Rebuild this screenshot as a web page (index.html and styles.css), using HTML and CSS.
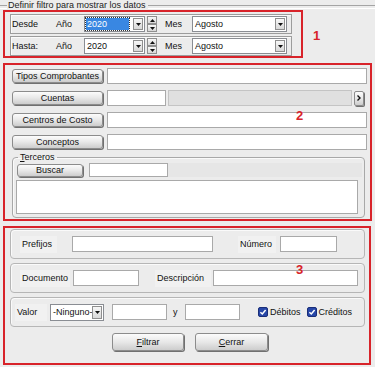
FILE: index.html
```html
<!DOCTYPE html>
<html lang="es">
<head>
  <meta charset="UTF-8">
  <meta name="viewport" content="width=device-width, initial-scale=1.0">
  <title>Definir filtro</title>
  <link rel="stylesheet" href="styles.css">
</head>
<body>
  <div class="group-title"><span>Definir filtro para mostrar los datos</span></div>

  <!-- Zona 1: periodo -->
  <div class="zone-top">
    <div class="mark mark-1">
      <div class="period">
        <span>Desde</span>
        <span>Año</span>
        <div class="combo">
          <span class="combo-text selected">2020</span>
          <span class="drop"><svg width="5" height="3" viewBox="0 0 5 3"><path d="M0 0h5L2.5 3z" fill="#111"/></svg></span>
        </div>
        <div class="spin">
          <span><svg width="5" height="3" viewBox="0 0 5 3"><path d="M0 3h5L2.5 0z" fill="#111"/></svg></span>
          <span><svg width="5" height="3" viewBox="0 0 5 3"><path d="M0 0h5L2.5 3z" fill="#111"/></svg></span>
        </div>
        <span class="lbl-mes">Mes</span>
        <div class="combo">
          <span class="combo-text">Agosto</span>
          <span class="drop"><svg width="5" height="3" viewBox="0 0 5 3"><path d="M0 0h5L2.5 3z" fill="#111"/></svg></span>
        </div>
      </div>
      <div class="period">
        <span>Hasta:</span>
        <span>Año</span>
        <div class="combo">
          <span class="combo-text">2020</span>
          <span class="drop"><svg width="5" height="3" viewBox="0 0 5 3"><path d="M0 0h5L2.5 3z" fill="#111"/></svg></span>
        </div>
        <div class="spin">
          <span><svg width="5" height="3" viewBox="0 0 5 3"><path d="M0 3h5L2.5 0z" fill="#111"/></svg></span>
          <span><svg width="5" height="3" viewBox="0 0 5 3"><path d="M0 0h5L2.5 3z" fill="#111"/></svg></span>
        </div>
        <span class="lbl-mes">Mes</span>
        <div class="combo">
          <span class="combo-text">Agosto</span>
          <span class="drop"><svg width="5" height="3" viewBox="0 0 5 3"><path d="M0 0h5L2.5 3z" fill="#111"/></svg></span>
        </div>
      </div>
    </div>
    <span class="num num-1">1</span>
  </div>

  <!-- Zona 2: selecciones -->
  <div class="mark mark-2">
    <div class="pick-row">
      <button class="btn btn-pick">Tipos Comprobantes</button>
      <div class="field field-wide"></div>
    </div>
    <div class="pick-row">
      <button class="btn btn-pick">Cuentas</button>
      <div class="field field-short"></div>
      <div class="field field-off"></div>
      <button class="btn btn-more"><svg width="4" height="6" viewBox="0 0 4 6"><path d="M0.5 0.5L3 3 0.5 5.5" fill="none" stroke="#111" stroke-width="1.4"/></svg></button>
    </div>
    <div class="pick-row">
      <button class="btn btn-pick">Centros de Costo</button>
      <div class="field field-wide"></div>
    </div>
    <div class="pick-row">
      <button class="btn btn-pick">Conceptos</button>
      <div class="field field-wide"></div>
    </div>
    <fieldset class="terceros">
      <legend><u>T</u>erceros</legend>
      <div class="buscar-row">
        <button class="btn btn-buscar">Buscar</button>
        <div class="field field-buscar"></div>
        <div class="band"></div>
      </div>
      <div class="notes"></div>
    </fieldset>
    <span class="num num-2">2</span>
  </div>

  <!-- Zona 3: criterios -->
  <div class="mark mark-3">
    <div class="panel">
      <span class="cap cap-prefijos">Prefijos</span>
      <div class="field f-prefijos"></div>
      <span class="cap cap-numero">Número</span>
      <div class="field f-numero"></div>
    </div>
    <div class="panel">
      <span class="cap cap-documento">Documento</span>
      <div class="field f-documento"></div>
      <span class="cap cap-descripcion">Descripción</span>
      <div class="field f-descripcion"></div>
    </div>
    <div class="panel">
      <span class="cap cap-valor">Valor</span>
      <div class="combo combo-valor">
        <span class="combo-text">-Ninguno-</span>
        <span class="drop"><svg width="5" height="3" viewBox="0 0 5 3"><path d="M0 0h5L2.5 3z" fill="#111"/></svg></span>
      </div>
      <div class="field f-valor"></div>
      <span class="and">y</span>
      <div class="field f-valor2"></div>
      <label class="check check-deb">
        <svg width="10" height="10" viewBox="0 0 10 10"><rect x="0.5" y="0.5" width="9" height="9" rx="1.5" fill="#2747a8" stroke="#1a2e78"/><path d="M2.4 5.2l1.9 1.8 3.3-4" fill="none" stroke="#fff" stroke-width="1.5"/></svg>
        Débitos
      </label>
      <label class="check check-cred">
        <svg width="10" height="10" viewBox="0 0 10 10"><rect x="0.5" y="0.5" width="9" height="9" rx="1.5" fill="#2747a8" stroke="#1a2e78"/><path d="M2.4 5.2l1.9 1.8 3.3-4" fill="none" stroke="#fff" stroke-width="1.5"/></svg>
        Créditos
      </label>
    </div>
    <div class="actions">
      <button class="btn btn-action"><u>F</u>iltrar</button>
      <button class="btn btn-action btn-cerrar"><u>C</u>errar</button>
    </div>
    <span class="num num-3">3</span>
  </div>
</body>
</html>
```

FILE: styles.css
```css
/* General */
* {
  box-sizing: border-box;
}

body {
  margin: 0;
  width: 375px;
  height: 367px;
  overflow: hidden;
  background: #ececec;
  font-family: "Liberation Sans", Arial, sans-serif;
  font-size: 9px;
  color: #111;
}

/* Group title */
.group-title {
  display: flex;
  height: 10px;
  line-height: 10px;
  color: #222;
}

.group-title::before,
.group-title::after {
  content: "";
  height: 2px;
  margin-top: 5px;
  border-top: 1px solid #a4a4a4;
  border-bottom: 1px solid #fff;
}

.group-title::before {
  width: 7px;
}

.group-title::after {
  flex: 1;
  margin-left: 2px;
}

.group-title span {
  margin-left: 1px;
  white-space: nowrap;
}

/* Red annotation boxes */
.mark {
  position: relative;
  border: 2px solid #d8232a;
}

.num {
  color: #d8232a;
  font-weight: bold;
  font-size: 13px;
  line-height: 13px;
}

.num-2,
.num-3 {
  position: absolute;
  left: 291px;
}

.num-2 {
  top: 44px;
}

.num-3 {
  top: 35px;
}

/* Zone 1 */
.zone-top {
  display: flex;
  align-items: center;
  padding-left: 3px;
}

.mark-1 {
  width: 300px;
  height: 48px;
  padding: 2px 0 0 5px;
}

.num-1 {
  margin-left: 10px;
  margin-top: 2px;
}

.period {
  display: grid;
  grid-template-columns: 44px 28px 61px 12px 35px 95px;
  align-items: center;
  width: 282px;
  height: 20px;
  margin-bottom: 2px;
  padding-left: 1px;
  border: 1px solid #9c9c9c;
  box-shadow: inset 1px 1px 0 #fafafa;
}

.lbl-mes {
  padding-left: 8px;
}

/* Combo boxes */
.combo {
  display: flex;
  height: 16px;
  padding: 1px;
  background: #fff;
  border: 1px solid #8a8d93;
}

.combo-text {
  flex: 1;
  line-height: 12px;
  padding-left: 1px;
  white-space: nowrap;
  overflow: hidden;
}

.combo-text.selected {
  margin-right: 4px;
  background: #3987e2;
  color: #fff;
  outline: 1px dotted #333;
}

.drop {
  display: flex;
  align-items: center;
  justify-content: center;
  width: 10px;
  border: 1px solid #8f8f8f;
  background: linear-gradient(#f7f7f7, #d8d8d8);
}

.spin {
  justify-self: end;
  display: flex;
  flex-direction: column;
  width: 10px;
  height: 16px;
}

.spin span {
  flex: 1;
  display: flex;
  align-items: center;
  justify-content: center;
  border: 1px solid #8f8f8f;
  background: linear-gradient(#f7f7f7, #d8d8d8);
}

/* Fields & buttons */
.field {
  height: 16px;
  background: #fff;
  border: 1px solid #a9a9a9;
}

.btn {
  display: flex;
  align-items: center;
  justify-content: center;
  padding: 0;
  font: inherit;
  color: #111;
  border: 1px solid #8c8c8c;
  border-radius: 3px;
  background: linear-gradient(#fcfcfc, #e8e8e8 50%, #cdcdcd);
  box-shadow: 1px 1px 0 #707070;
}

/* Zone 2 */
.mark-2 {
  width: 369px;
  margin: 5px 0 0 3px;
  padding: 3px 0 1px 0;
}

.pick-row {
  display: flex;
  align-items: center;
  height: 16px;
}

.pick-row + .pick-row {
  margin-top: 6px;
}

.btn-pick {
  width: 91px;
  height: 14px;
  margin-left: 7px;
}

.field-wide {
  width: 260px;
  margin-left: 4px;
}

.field-short {
  width: 59px;
  margin-left: 4px;
}

.field-off {
  width: 184px;
  margin-left: 2px;
  background: #e0e0e0;
  border-color: #c4c4c4;
}

.btn-more {
  width: 10px;
  height: 15px;
  margin-left: 2px;
  border-radius: 2px;
}

.terceros {
  width: 353px;
  margin: 2px 0 0 7px;
  padding: 0;
  border: 1px solid #a8a8a8;
  border-radius: 4px;
  box-shadow: inset 1px 1px 0 #fafafa;
}

.terceros legend {
  margin-left: 5px;
  padding: 0 2px;
  line-height: 10px;
}

.buscar-row {
  display: flex;
  align-items: center;
  height: 14px;
  margin-top: 1px;
}

.btn-buscar {
  width: 66px;
  height: 13px;
  margin-left: 4px;
}

.field-buscar {
  width: 79px;
  height: 14px;
  margin-left: 6px;
}

.band {
  flex: 1;
  align-self: stretch;
  margin-right: 2px;
  background: #e6e6e6;
}

.notes {
  height: 34px;
  margin: 3px 6px 3px 3px;
  background: #fff;
  border: 1px solid #a9a9a9;
}

/* Zone 3 */
.mark-3 {
  width: 368px;
  height: 139px;
  margin: 5px 0 0 3px;
  padding: 1px 0 0 5px;
}

.panel {
  display: flex;
  align-items: center;
  width: 355px;
  height: 30px;
  margin-bottom: 4px;
  border: 1px solid #b6b6b6;
  border-radius: 4px;
  box-shadow: inset 1px 1px 0 #fafafa;
}

.cap {
  height: 17px;
  line-height: 17px;
  padding-left: 2px;
  background: #f1f1f1;
  white-space: nowrap;
}

.cap-prefijos { width: 37px; margin-left: 9px; }
.f-prefijos { width: 141px; margin-left: 15px; }
.cap-numero { width: 38px; margin-left: 25px; }
.f-numero { width: 57px; margin-left: 4px; }

.cap-documento { width: 50px; margin-left: 9px; }
.f-documento { width: 66px; margin-left: 3px; }
.cap-descripcion { width: 56px; margin-left: 16px; }
.f-descripcion { width: 145px; margin-left: 2px; }

.cap-valor { width: 32px; margin-left: 4px; }

.combo-valor {
  width: 54px;
  height: 17px;
  margin-left: 3px;
}

.f-valor { width: 55px; margin-left: 8px; }

.and {
  width: 12px;
  margin-left: 6px;
}

.f-valor2 { width: 55px; }

.check {
  display: flex;
  align-items: center;
  gap: 2px;
}

.check-deb { margin-left: 18px; }
.check-cred { margin-left: 6px; }

.actions {
  display: flex;
  gap: 11px;
  margin-top: 6px;
  padding-left: 102px;
}

.btn-action {
  width: 72px;
  height: 18px;
}

.btn-cerrar {
  width: 73px;
}
```
